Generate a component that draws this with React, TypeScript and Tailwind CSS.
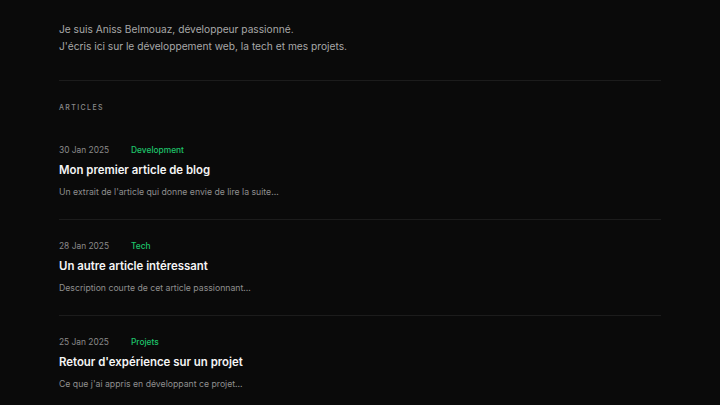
const articles = [
  {
    date: "30 Jan 2025",
    category: "Development",
    title: "Mon premier article de blog",
    excerpt: "Un extrait de l'article qui donne envie de lire la suite...",
  },
  {
    date: "28 Jan 2025",
    category: "Tech",
    title: "Un autre article intéressant",
    excerpt: "Description courte de cet article passionnant...",
  },
  {
    date: "25 Jan 2025",
    category: "Projets",
    title: "Retour d'expérience sur un projet",
    excerpt: "Ce que j'ai appris en développant ce projet...",
  },
];

export default function App() {
  return (
    <div
      className="h-screen bg-[#0a0a0a] text-white overflow-hidden"
      style={{ fontFamily: "Inter, 'Noto Sans', sans-serif" }}
    >
      <main className="w-[602px] mx-auto pt-[20.5px]">
        {/* intro */}
        <section className="pb-[25.5px] border-b border-[#1c1c1c]">
          <p className="text-[10.2px] leading-[17px] text-[#a8a8a8]">
            Je suis Aniss Belmouaz, développeur passionné.
            <br />
            J'écris ici sur le développement web, la tech et mes projets.
          </p>
        </section>

        <section className="pt-[21.5px]">
          <h2 className="text-[7px] leading-[10px] tracking-[0.2em] text-[#8a8a8a] font-medium uppercase mb-[31.5px]">
            Articles
          </h2>

          <div>
            {articles.map((article, idx) => (
              <article
                key={idx}
                className={
                  idx === 0
                    ? "pb-[20.5px] border-b border-[#1c1c1c]"
                    : "pt-[20px] pb-[20.5px] border-b border-[#1c1c1c] last:border-b-0"
                }
              >
                <div className="flex items-center text-[8.4px] leading-[12px]">
                  <span className="w-[72px] text-[#8a8a8a]">{article.date}</span>
                  <span className="text-[#1ec46a] font-medium">{article.category}</span>
                </div>
                <h3 className="mt-[5.5px] text-[11.4px] leading-[16px] font-semibold text-[#f5f5f5]">
                  {article.title}
                </h3>
                <p className="mt-[7px] text-[8.7px] leading-[14px] text-[#8f8f8f]">
                  {article.excerpt}
                </p>
              </article>
            ))}
          </div>
        </section>
      </main>
    </div>
  );
}
